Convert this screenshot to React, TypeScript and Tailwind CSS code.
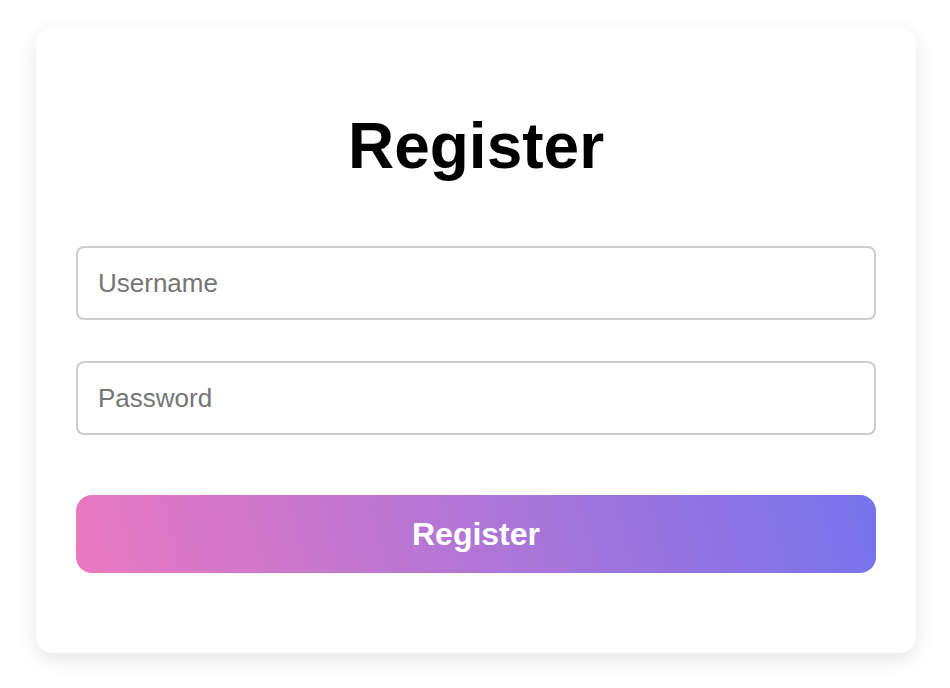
export default function App() {
  return (
    <div
      className="min-h-screen bg-white pt-[27px] pl-[36px]"
      style={{ fontFamily: '"Liberation Sans", Arial, sans-serif' }}
    >
      <div className="w-[880px] rounded-2xl bg-[#fefefe] px-10 pt-[82px] pb-[80px] shadow-[0_6px_20px_rgba(0,0,0,0.1)]">
        <h1 className="text-center text-[64px] font-bold leading-[74px] text-black">
          Register
        </h1>

        <form className="mt-[63px] flex flex-col" onSubmit={(e) => e.preventDefault()}>
          <input
            type="text"
            placeholder="Username"
            className="h-[74px] w-full rounded-lg border-2 border-[#cccccc] bg-white px-5 text-[26px] text-[#333] placeholder:text-[#757575] outline-none"
          />
          <input
            type="password"
            placeholder="Password"
            className="mt-[41px] h-[74px] w-full rounded-lg border-2 border-[#cccccc] bg-white px-5 text-[26px] text-[#333] placeholder:text-[#757575] outline-none"
          />
          <button
            type="submit"
            className="mt-[60px] h-[78px] w-full rounded-2xl bg-linear-[75deg] from-[#ea78c0] to-[#7673ec] text-[32px] font-bold text-white"
          >
            Register
          </button>
        </form>
      </div>
    </div>
  );
}
